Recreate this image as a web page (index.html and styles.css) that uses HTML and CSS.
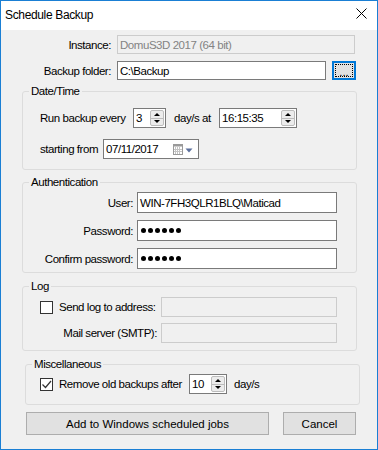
FILE: index.html
```html
<!DOCTYPE html>
<html lang="en">
<head>
  <meta charset="UTF-8" />
  <meta name="viewport" content="width=device-width, initial-scale=1" />
  <title>Schedule Backup</title>
  <link rel="stylesheet" href="styles.css">
</head>
<body>
  <div class="window">
    <div class="titlebar">
      <span class="title">Schedule Backup</span>
      <svg class="close" width="11" height="11" viewBox="0 0 11 11">
        <path d="M0.5 0.5L10.5 10.5M10.5 0.5L0.5 10.5" stroke="#000" stroke-width="1" fill="none"/>
      </svg>
    </div>

    <div class="dialog">
      <div class="row top-row">
        <span class="top-label">Instance:</span>
        <div class="box disabled instance">DomuS3D 2017 (64 bit)</div>
      </div>
      <div class="row top-row folder-row">
        <span class="top-label">Backup folder:</span>
        <div class="box folder">C:\Backup</div>
        <button class="browse"><span class="focus">...</span></button>
      </div>

      <fieldset class="group datetime">
        <legend>Date/Time</legend>
        <div class="row">
          <span class="lbl every">Run backup every</span>
          <div class="box spin days">
            <span>3</span>
            <span class="spinner"><span class="up"></span><span class="down"></span></span>
          </div>
          <span class="lbl dayat">day/s at</span>
          <div class="box spin time">
            <span>16:15:35</span>
            <span class="spinner"><span class="up"></span><span class="down"></span></span>
          </div>
        </div>
        <div class="row start-row">
          <span class="lbl from">starting from</span>
          <div class="box date">
            <span>07/11/2017</span>
            <svg class="cal" width="20" height="11" viewBox="0 0 20 11">
              <rect x="0.5" y="0.5" width="9" height="10" fill="#fff" stroke="#9a9a9a"/>
              <rect x="0.5" y="0.5" width="9" height="2" fill="#9a9a9a"/>
              <path d="M2.5 3v7M4.5 3v7M6.5 3v7M1 5.5h8M1 7.5h8" stroke="#c4c4c4" stroke-width="1"/>
              <path d="M12.5 4.5h7l-3.5 4z" fill="#5b6f9c"/>
            </svg>
          </div>
        </div>
      </fieldset>

      <fieldset class="group auth">
        <legend>Authentication</legend>
        <div class="row auth-row">
          <span class="auth-label">User:</span>
          <div class="box auth-box">WIN-7FH3QLR1BLQ\Maticad</div>
        </div>
        <div class="row auth-row">
          <span class="auth-label">Password:</span>
          <div class="box auth-box"><span class="dots"><i></i><i></i><i></i><i></i><i></i><i></i></span></div>
        </div>
        <div class="row auth-row">
          <span class="auth-label">Confirm password:</span>
          <div class="box auth-box"><span class="dots"><i></i><i></i><i></i><i></i><i></i><i></i></span></div>
        </div>
      </fieldset>

      <fieldset class="group log">
        <legend>Log</legend>
        <div class="row">
          <span class="check"></span>
          <span class="lbl send">Send log to address:</span>
          <div class="box disabled log-box"></div>
        </div>
        <div class="row smtp-row">
          <span class="smtp-label">Mail server (SMTP):</span>
          <div class="box disabled log-box"></div>
        </div>
      </fieldset>

      <fieldset class="group misc">
        <legend>Miscellaneous</legend>
        <div class="row">
          <span class="check checked">
            <svg width="11" height="11" viewBox="0 0 11 11"><path d="M1.5 5.5l3 3 5.5-6.5" stroke="#333" stroke-width="1.2" fill="none"/></svg>
          </span>
          <span class="lbl remove">Remove old backups after</span>
          <div class="box spin keep">
            <span>10</span>
            <span class="spinner"><span class="up"></span><span class="down"></span></span>
          </div>
          <span class="lbl dayat">day/s</span>
        </div>
      </fieldset>

      <div class="row buttons">
        <button class="btn add">Add to Windows scheduled jobs</button>
        <button class="btn cancel">Cancel</button>
      </div>
    </div>
  </div>
</body>
</html>
```

FILE: styles.css
```css
body {
  margin: 0;
  font-family: "Liberation Sans", Arial, sans-serif;
  font-size: 11.5px;
  letter-spacing: -0.45px;
  color: #000;
}
.window {
  width: 378px;
  height: 450px;
  box-sizing: border-box;
  border: 1px solid #1a7fd4;
  background: #f0f0f0;
}
.titlebar {
  height: 29px;
  background: #fff;
  display: flex;
  align-items: flex-start;
}
.title {
  font-size: 12px;
  letter-spacing: -0.35px;
  line-height: 16px;
  margin: 6px 0 0 4px;
}
.close {
  margin: 7px 10px 0 auto;
}
.dialog {
  padding: 5px 0 0 21px;
}
.row {
  display: flex;
  align-items: center;
}
.box {
  box-sizing: border-box;
  height: 19px;
  border: 1px solid #7a7a7a;
  background: #fff;
  padding: 0 2px;
  display: flex;
  align-items: center;
  white-space: nowrap;
}
.box.disabled {
  background: #f0f0f0;
  border-color: #cccccc;
  color: #838383;
}
.top-label {
  width: 89px;
  text-align: right;
  margin-right: 6px;
}
.instance {
  width: 238px;
}
.folder-row {
  margin-top: 7px;
}
.folder {
  width: 209px;
}
.browse {
  box-sizing: border-box;
  width: 24px;
  height: 19px;
  margin-left: 6px;
  padding: 1px;
  border: 2px solid #0078d7;
  background: #e1e1e1;
  font: inherit;
  line-height: 8px;
}
.browse .focus {
  display: flex;
  align-items: flex-end;
  justify-content: center;
  height: 100%;
  box-sizing: border-box;
  border: 1px dotted #000;
}

/* group boxes */
.group {
  box-sizing: border-box;
  width: 335px;
  margin: 4px 0 0 0;
  padding: 10px 0 10px 17px;
  border: 1px solid #dcdcdc;
  border-radius: 3px;
}
.group legend {
  padding: 0 2px;
  margin-left: -11px;
  line-height: 14px;
}
.lbl {
  white-space: nowrap;
}
.every {
  width: 93px;
}
.spin {
  justify-content: space-between;
  padding-right: 1px;
}
.days {
  width: 33px;
  height: 20px;
}
.time {
  width: 78px;
  height: 20px;
}
.dayat {
  margin-left: 8px;
  width: 45px;
}
.spinner {
  box-sizing: border-box;
  width: 14px;
  height: 16px;
  border: 1px solid #bcbcbc;
  border-radius: 2px;
  background: #ececec;
  display: flex;
  flex-direction: column;
}
.spinner .up,
.spinner .down {
  flex: 1;
  display: flex;
  align-items: center;
  justify-content: center;
}
.spinner .up {
  border-bottom: 1px solid #bcbcbc;
}
.spinner .up::after {
  content: "";
  border-left: 3px solid transparent;
  border-right: 3px solid transparent;
  border-bottom: 3px solid #000;
}
.spinner .down::after {
  content: "";
  border-left: 3px solid transparent;
  border-right: 3px solid transparent;
  border-top: 3px solid #000;
}
.start-row {
  margin-top: 11px;
}
.from {
  width: 63px;
}
.date {
  width: 96px;
  height: 20px;
  justify-content: space-between;
  padding-right: 5px;
}
.cal {
  display: block;
}

.auth {
  margin-top: 5px;
  padding-top: 3px;
  padding-bottom: 3px;
}
.auth-row + .auth-row {
  margin-top: 7px;
}
.auth-label {
  width: 93px;
  text-align: right;
  margin-right: 4px;
  white-space: nowrap;
}
.auth-box {
  width: 200px;
  height: 21px;
}
.dots {
  display: flex;
  gap: 2px;
  margin-left: 1px;
}
.dots i {
  width: 5px;
  height: 5px;
  border-radius: 50%;
  background: #000;
}

.log {
  margin-top: 6px;
  padding-top: 4px;
  padding-bottom: 7px;
}
.check {
  box-sizing: border-box;
  width: 13px;
  height: 13px;
  border: 1px solid #333;
  background: #fff;
  display: flex;
  align-items: center;
  justify-content: center;
}
.send {
  width: 96px;
  margin-left: 6px;
  margin-right: 6px;
}
.log-box {
  width: 176px;
  height: 20px;
}
.smtp-row {
  margin-top: 6px;
}
.smtp-label {
  width: 117px;
  text-align: right;
  margin-right: 4px;
  white-space: nowrap;
}

.misc {
  margin: 6px 0 0 3px;
  padding: 3px 0 10px 14px;
}
.misc legend {
  margin-left: -8px;
}
.remove {
  width: 130px;
  margin-left: 6px;
}
.keep {
  width: 38px;
  height: 20px;
}
.misc .dayat {
  margin-left: 7px;
}

.buttons {
  margin: 7px 0 0 4px;
}
.btn {
  box-sizing: border-box;
  height: 23px;
  border: 1px solid #adadad;
  background: #e1e1e1;
  font: inherit;
  color: #000;
  padding: 0;
}
.add {
  width: 243px;
}
.cancel {
  width: 73px;
  margin-left: 14px;
}
```
